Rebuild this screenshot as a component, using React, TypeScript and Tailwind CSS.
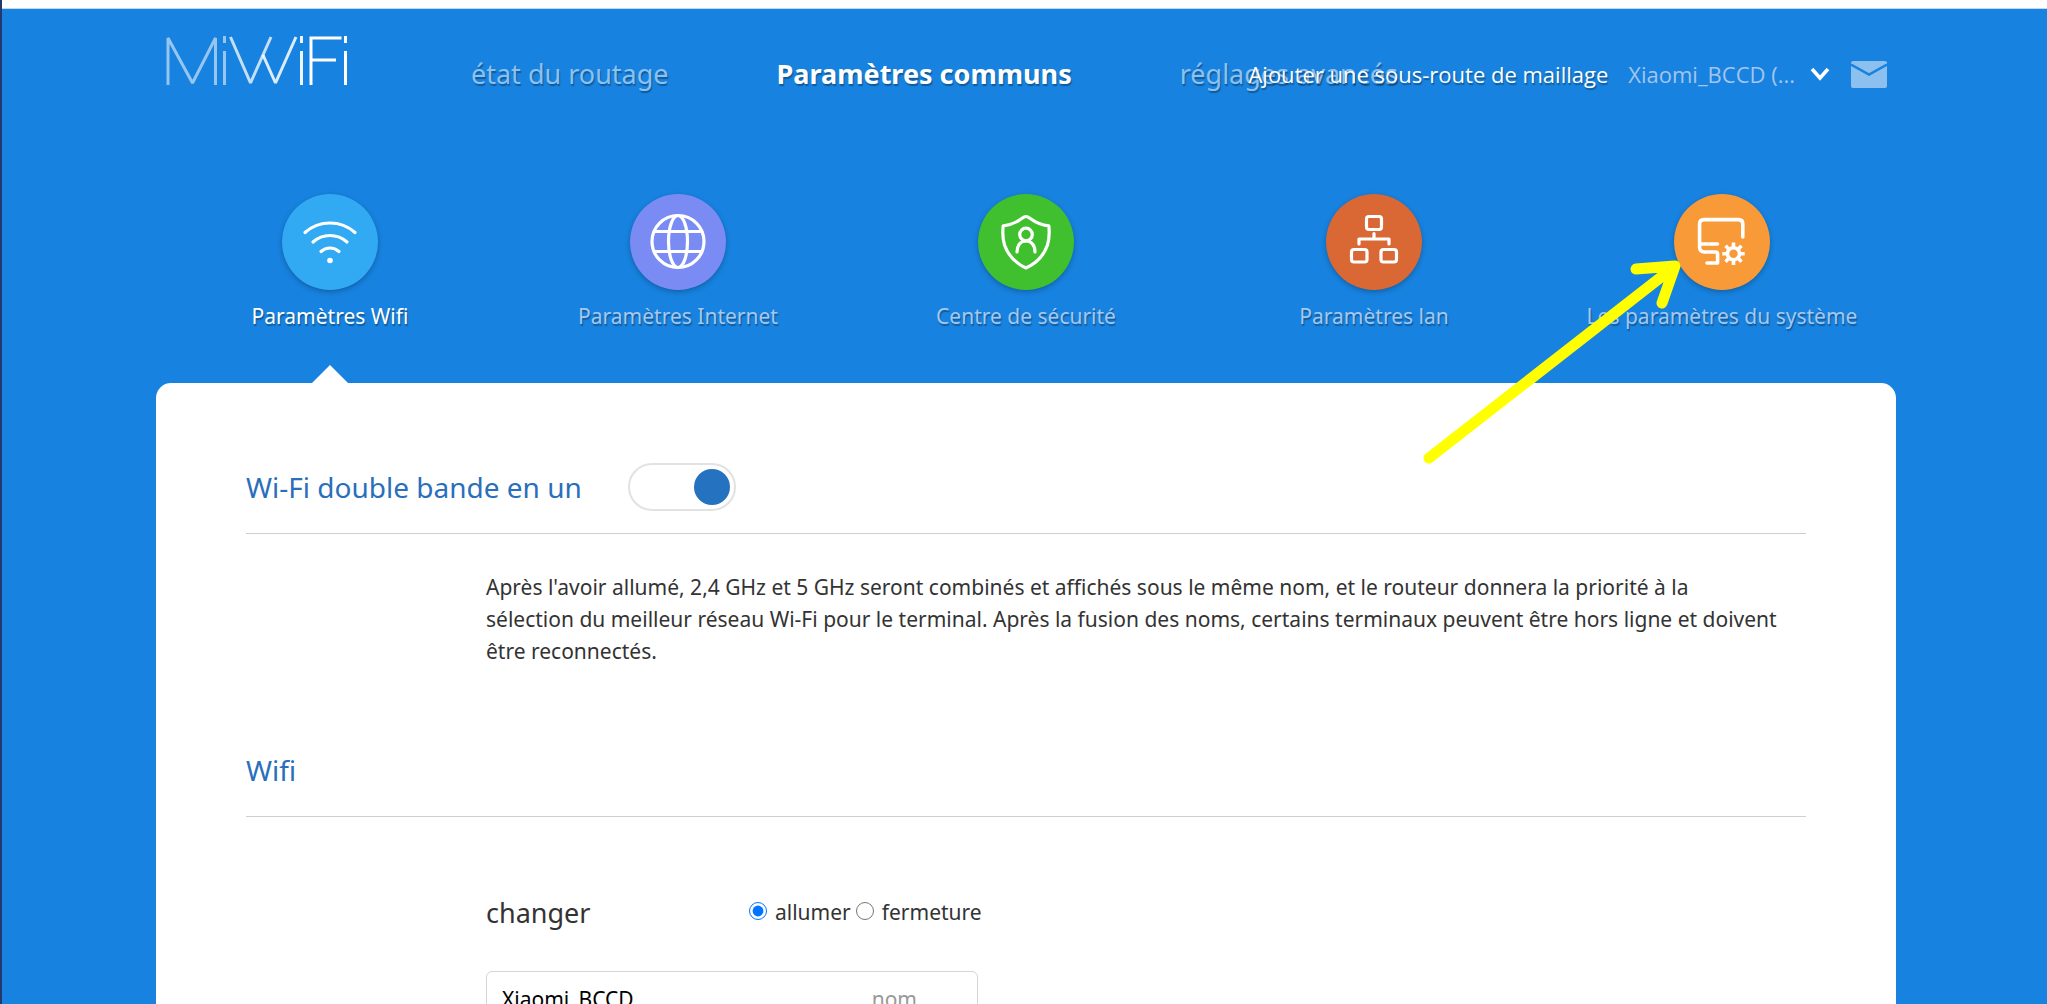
import React, { useState } from "react";

const shadow = "[text-shadow:1px_2px_1px_rgba(0,0,0,0.3)]";

function Logo() {
  return (
    <svg viewBox="0 0 184 50" className="h-[50px] w-[184px]" fill="none" stroke="#fff" strokeWidth="3" role="img" aria-label="MiWiFi">
      <g opacity="0.55">
        <path d="M2 49V2L26.500 47L49.500 2V49" strokeLinejoin="bevel" />
        <path d="M58.500 0V7M58.500 15V49" />
      </g>
      <path opacity="0.75" d="M64.500 1L84.500 47L105 1" strokeLinejoin="bevel" />
      <path opacity="0.85" d="M97 19L109.500 47L130 1" strokeLinejoin="bevel" />
      <path opacity="0.92" d="M135.500 0V7M135.500 15V49" />
      <path d="M145 49V2H175.500M145 24H170M179.500 0V7M179.500 15V49" />
    </svg>
  );
}

const icons: Record<string, React.ReactNode> = {
  wifi: (
    <>
      <path d="M23 38.500A37.600 37.600 0 0 1 73 38.500M31 48A25.500 25.500 0 0 1 65 48M39 57.500A13.300 13.300 0 0 1 57 57.500" />
      <circle cx="48" cy="66.500" r="2.800" fill="#fff" stroke="none" />
    </>
  ),
  globe: (
    <>
      <circle cx="48" cy="47.500" r="26" />
      <ellipse cx="48" cy="47.500" rx="9.500" ry="26" />
      <path d="M25 37.500H71M25 57.500H71" />
    </>
  ),
  shield: (
    <>
      <path d="M48 22.500C50 22.500 51 23.500 53 25C58 28.800 64 31 70.800 31.800C71.500 38 71.500 44 69.500 51C66 61 59 69 48 74C37 69 30 61 26.500 51C24.500 44 24.500 38 25.200 31.800C32 31 38 28.800 43 25C45 23.500 46 22.500 48 22.500Z" />
      <circle cx="48" cy="40.500" r="6.300" />
      <path d="M39 58C39 51.500 42.500 47 48 47S57 51.500 57 58" />
    </>
  ),
  lan: (
    <>
      <rect x="40.500" y="22.500" width="15" height="13" rx="2.500" />
      <rect x="25.500" y="55.500" width="15.500" height="12.500" rx="2.500" />
      <rect x="55" y="55.500" width="15.500" height="12.500" rx="2.500" />
      <path d="M48 39.500V45M33 50V45H63V50" />
    </>
  ),
  system: (
    <>
      <path d="M68.800 43V30Q68.800 25.600 64.400 25.600H30Q25.600 25.600 25.600 30V53Q25.600 58 30.600 58H41.600Q43.600 58 43.600 60V69H33M25.600 50H43.500" strokeWidth="3.600" />
      <circle cx="59.500" cy="59.800" r="6" strokeWidth="3.600" />
      <path strokeLinecap="butt" strokeWidth="3.600" d="M59.500 53V48.600M59.500 66.600V71M52.700 59.800H48.300M66.300 59.800H70.700M54.700 55L51.500 51.800M64.300 64.600L67.500 67.800M64.300 55L67.500 51.800M54.700 64.600L51.500 67.800" />
    </>
  ),
};

const tabs = [
  { icon: "wifi", label: "Paramètres Wifi", color: "bg-[#31a9f3]" },
  { icon: "globe", label: "Paramètres Internet", color: "bg-[#7a8bf4]" },
  { icon: "shield", label: "Centre de sécurité", color: "bg-[#41c02f]" },
  { icon: "lan", label: "Paramètres lan", color: "bg-[#d96834]" },
  { icon: "system", label: "Les paramètres du système", color: "bg-[#f89a38]" },
];

function PointerArrow() {
  return (
    <svg
      viewBox="0 0 270 220"
      className="pointer-events-none absolute top-14 right-20 z-10 h-[220px] w-[270px]"
      fill="none"
      stroke="#ffff00"
      strokeWidth="11"
      strokeLinecap="round"
      strokeLinejoin="round"
      aria-hidden="true"
    >
      <path d="M9 208L254 17M216 19L255 16L242 53" />
    </svg>
  );
}

function SectionHeading({ title, children }: { title: string; children?: React.ReactNode }) {
  return (
    <div className="flex items-center gap-[46px] border-b border-[#cfcfcf] pb-[22px]">
      <h2 className="text-[28px] leading-[48px] text-[#2a6fbb]">{title}</h2>
      {children}
    </div>
  );
}

export default function App() {
  const [tab, setTab] = useState(0);
  const [merged, setMerged] = useState(true);
  const [power, setPower] = useState("on");

  return (
    <div className="flex h-screen flex-col overflow-hidden border-l-2 border-[#24386b] bg-[#1782df] font-['Noto_Sans','Open_Sans',sans-serif] text-[21px] text-[#333]">
      <div className="h-[9px] shrink-0 border-b border-[#b9dbf7] bg-white" />
      <div className="flex flex-1 flex-col pr-[151px] pl-[154px]">
        <header className="flex h-[130px] shrink-0 items-center pr-[9px] pl-[10px] whitespace-nowrap">
          <a href="#accueil" className="mt-[27px] self-start">
            <Logo />
          </a>
          <nav className={`ml-[121px] flex min-w-0 flex-1 gap-[108px] text-[27px] leading-9 text-[#8cc1f0] ${shadow}`}>
            <a href="#etat">état du routage</a>
            <a href="#communs" className="font-bold text-white" aria-current="page">
              Paramètres communs
            </a>
            <a href="#avances">réglages avancés</a>
          </nav>
          <div className={`relative flex items-center font-['Open_Sans',sans-serif] text-[22px] ${shadow}`}>
            <a href="#maillage" className="mr-5 text-white">
              Ajouter une sous-route de maillage
            </a>
            <button type="button" className="flex items-center gap-[15px] text-[#a4c5ee]">
              <span>Xiaomi_BCCD (...</span>
              <svg viewBox="0 0 20 14" className="h-[14px] w-5" fill="none" stroke="#fff" strokeWidth="3.500" aria-hidden="true">
                <path d="M2 2L10 11L18 2" />
              </svg>
            </button>
            <button type="button" className="ml-[21px]" aria-label="Messages">
              <svg viewBox="0 0 36 27" className="h-[27px] w-9" aria-hidden="true">
                <rect width="36" height="27" rx="2" fill="#8cc0ef" />
                <path d="M0 3.500L18 13.500L36 3.500" fill="none" stroke="#1782df" strokeWidth="2.500" />
              </svg>
            </button>
          </div>
        </header>

        <nav className="grid shrink-0 grid-cols-5 pt-[55px]">
          {tabs.map((t, i) => (
            <div key={t.icon} className="relative flex justify-center pb-[51px]">
              <button type="button" onClick={() => setTab(i)} className="relative flex flex-col items-center">
                <span className={`size-24 rounded-full shadow-[0_2px_5px_rgba(0,0,0,0.25)] ${t.color}`}>
                  <svg viewBox="0 0 96 96" className="size-24" fill="none" stroke="#fff" strokeWidth="3.200" strokeLinecap="round" strokeLinejoin="round" aria-hidden="true">
                    {icons[t.icon]}
                  </svg>
                </span>
                <span className={`mt-[10px] leading-8 whitespace-nowrap ${shadow} ${i === tab ? "text-white" : "text-[#a4c8f0]"}`}>
                  {t.label}
                </span>
              </button>
              {i === tab && (
                <span className="absolute bottom-0 h-[18px] w-9 bg-white [clip-path:polygon(50%_0,100%_100%,0_100%)]" />
              )}
              {t.icon === "system" && (
                <div className="pointer-events-none absolute top-0 w-24">
                  <PointerArrow />
                </div>
              )}
            </div>
          ))}
        </nav>

        <main className="flex-1 rounded-t-[15px] bg-white px-[90px] pt-20 pb-16">
          <section>
            <SectionHeading title="Wi-Fi double bande en un">
              <button
                type="button"
                role="switch"
                aria-checked={merged}
                aria-label="Wi-Fi double bande en un"
                onClick={() => setMerged(!merged)}
                className={`flex h-12 w-[108px] items-center rounded-full border-2 border-[#e2e2e2] bg-white px-1 ${merged ? "justify-end" : "justify-start"}`}
              >
                <span className="size-9 rounded-full bg-[#2472c0]" />
              </button>
            </SectionHeading>
            <p className="mt-[37px] ml-60 leading-8">
              Après l'avoir allumé, 2,4 GHz et 5 GHz seront combinés et affichés sous le même nom, et le routeur donnera la priorité à la
              <br />
              sélection du meilleur réseau Wi-Fi pour le terminal. Après la fusion des noms, certains terminaux peuvent être hors ligne et doivent
              <br />
              être reconnectés.
            </p>
          </section>

          <section className="mt-[79px]">
            <SectionHeading title="Wifi" />
            <form className="mt-[72px] ml-60">
              <div role="radiogroup" aria-labelledby="changer" className="flex h-12 items-center">
                <span id="changer" className="w-[263px] text-[27px]">
                  changer
                </span>
                <div className="flex items-center gap-[5px]">
                  <label className="flex items-center gap-2">
                    <input type="radio" name="power" className="mb-1 size-[18px]" checked={power === "on"} onChange={() => setPower("on")} />
                    allumer
                  </label>
                  <label className="flex items-center gap-2">
                    <input type="radio" name="power" className="mb-1 size-[18px]" checked={power === "off"} onChange={() => setPower("off")} />
                    fermeture
                  </label>
                </div>
              </div>
              <div className="mt-[34px] flex h-[58px] w-[492px] items-center rounded-md border border-[#d5d5d5] pr-[60px] pl-[15px]">
                <input id="ssid" type="text" defaultValue="Xiaomi_BCCD" className="min-w-0 flex-1 text-black outline-none" />
                <label htmlFor="ssid" className="text-[#999]">
                  nom
                </label>
              </div>
            </form>
          </section>
        </main>
      </div>
    </div>
  );
}
